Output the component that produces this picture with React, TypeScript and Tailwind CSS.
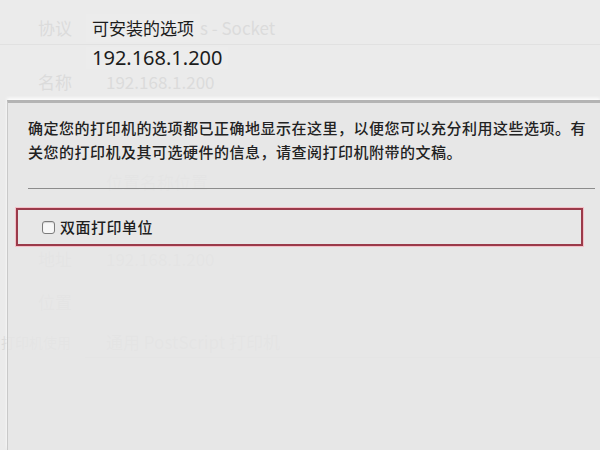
const cjk = { fontFamily: '"Noto Sans CJK SC", "Noto Sans", sans-serif' }

function GhostRow({ label, value, className = '', valueClass = 'ml-[34px]', labelClass = '' }: { label: string; value: string; className?: string; valueClass?: string; labelClass?: string }) {
  return (
    <div className={`flex items-center h-[22px] text-[17px] text-[#dbdbdb] ${className}`}>
      <span className={`w-[72px] shrink-0 flex justify-end whitespace-nowrap ${labelClass}`}>{label}</span>
      <span className={`whitespace-nowrap ${valueClass}`}>{value}</span>
    </div>
  )
}

function Checkbox() {
  return <span className="inline-block w-[13px] h-[13px] rounded-[3px] border border-[#7c7c7c] bg-[#f7f7f7] shadow-[inset_0_1px_1px_rgba(0,0,0,0.15)]" />
}

export default function App() {
  return (
    <div className="relative w-[600px] h-[450px] overflow-hidden bg-[#ebebeb]" style={cjk}>
      {/* dimmed window underneath the sheet */}
      <div className="flex flex-col pt-[17px]">
        <GhostRow label="协议" value="s - Socket" valueClass="ml-[128px]" />
        <div className="mt-[5px] border-t border-[#e1e1e1]" />
        <GhostRow label="名称" value="192.168.1.200" className="mt-[26px]" />
        <GhostRow label="" value="位置名称位置" className="mt-[78px] text-[#dddddd]" />
        <GhostRow label="地址" value="192.168.1.200" className="mt-[55px]" />
        <GhostRow label="位置" value="" className="mt-[21px]" />
        <GhostRow label="打印机使用" value="通用 PostScript 打印机" labelClass="text-[14px] pr-[1px]" className="mt-[18px]" />
        <div className="mt-[4px] ml-[85px] border-t border-[#e0e0e0]" />
      </div>

      {/* sheet header */}
      <div className="absolute left-[86px] top-[14px] flex flex-col items-start">
        <span className="px-[6px] py-[2px] bg-[#ececec] text-[17px] leading-[24px] text-[#1c1c1c]">可安装的选项</span>
        <span className="mt-[5px] px-[6px] bg-[#ececec] text-[20px] leading-[22px] text-[#1c1c1c]" style={{ fontFamily: '"Noto Sans", sans-serif' }}>
          192.168.1.200
        </span>
      </div>

      {/* options sheet */}
      <div className="absolute top-[100px] left-[7px] right-0 bottom-0 bg-[#e6e6e6]/80 border-t-[3px] border-l border-t-[#b4b4b4] border-l-[#c9c9c9] shadow-[0_-2px_3px_rgba(255,255,255,0.9)]">
        <div className="pl-[20px] pt-[13px] text-[15px] leading-[24px] tracking-[0.5px] text-[#222] font-medium">
          <p className="whitespace-nowrap">确定您的打印机的选项都已正确地显示在这里，以便您可以充分利用这些选项。有</p>
          <p className="whitespace-nowrap">关您的打印机及其可选硬件的信息，请查阅打印机附带的文稿。</p>
        </div>
        <div className="mt-[24px] ml-[20px] mr-[5px] border-t border-[#8c8c8c]" />
        <div className="mt-[19px] ml-[8px] w-[567px] h-[38px] flex items-center pl-[24px] gap-[5px] border-2 border-[#9b3b4a] shadow-[0_0_0_1px_#f4c0c8]">
          <Checkbox />
          <span className="text-[15px] tracking-[0.5px] text-[#1e1e1e] font-medium">双面打印单位</span>
        </div>
      </div>
    </div>
  )
}
